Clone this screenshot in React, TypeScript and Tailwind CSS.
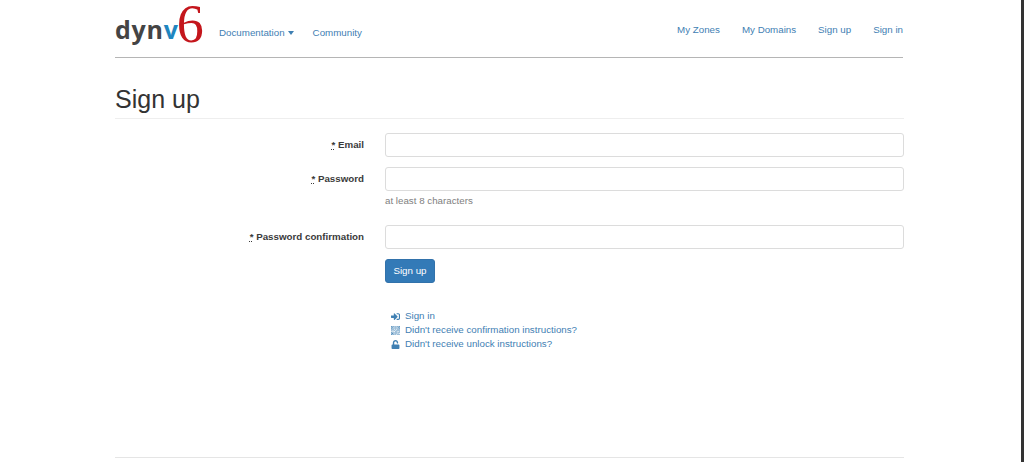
import { FaSignInAlt, FaUnlock } from "react-icons/fa";
import { ImQrcode } from "react-icons/im";

const inputClass = "block h-6 w-full min-w-0 rounded-[3px] border border-[#dcdcdc] bg-white";

function Label({ text }: { text: string }) {
    return (
        <label className="w-[249px] shrink-0 pt-[4px] text-right text-[9.75px] leading-4 font-bold text-[#3a3a3a]">
            <span className="underline decoration-dotted">*</span> {text}
        </label>
    );
}

export default function App() {
    return (
        <div className="flex h-[462px] w-full overflow-hidden border-r-[3px] border-[#333] bg-white font-['Liberation_Sans',Arial,sans-serif]">
            <div className="ml-[115px] flex w-[789px] flex-col">
                <nav className="mr-px flex h-[58px] shrink-0 border-b border-[#b5b5b5] text-[9.75px] text-[#3f80b3]">
                    <a className="flex w-[92px] items-start">
                        <span className="mt-[17px] font-['Open_Sans',sans-serif] text-[25px] leading-[24px] font-bold tracking-[0.75px] text-[#444]">
                            dyn<span className="text-[#1f86c0]">v</span>
                        </span>
                        <span className="ml-[-2px] font-['Liberation_Serif',serif] text-[54px] leading-[48px] font-normal text-[#c4161c]">6</span>
                    </a>
                    <div className="ml-[12px] flex gap-[19px] pt-[27px] leading-3">
                        <a className="flex items-start">
                            Documentation
                            <span className="mt-1 ml-[3px] border-x-[3.5px] border-t-[4px] border-x-transparent border-t-[#3f80b3]" />
                        </a>
                        <a>Community</a>
                    </div>
                    <div className="ml-auto flex gap-[22px] pt-[24px] leading-3">
                        <a>My Zones</a>
                        <a>My Domains</a>
                        <a>Sign up</a>
                        <a>Sign in</a>
                    </div>
                </nav>

                <h1 className="mt-[27px] h-[34px] border-b border-[#eee] text-[25px] leading-[29px] text-[#333]">Sign up</h1>

                <form className="mt-[14px] flex flex-col">
                    <div className="flex h-[34px] gap-[21px]">
                        <Label text="Email" />
                        <input className={inputClass} />
                    </div>
                    <div className="flex gap-[21px]">
                        <Label text="Password" />
                        <div className="min-w-0 grow">
                            <input className={inputClass} />
                            <p className="mt-[3px] h-[31px] text-[9.75px] leading-[13px] text-[#808080]">at least 8 characters</p>
                        </div>
                    </div>
                    <div className="flex h-[34px] gap-[21px]">
                        <Label text="Password confirmation" />
                        <input className={inputClass} />
                    </div>
                    <div className="mt-[-2px] ml-[270px]">
                        <button type="button" className="h-6 w-[50px] rounded-[3px] border border-[#3272ab] bg-[#337ab7] text-[9.75px] text-white">
                            Sign up
                        </button>
                        <ul className="mt-[26px] ml-[6px] text-[9.75px] leading-[14px] text-[#3f80b3]">
                            <li className="flex items-center gap-[5px]">
                                <FaSignInAlt className="h-[9px] w-[9px]" />
                                <a>Sign in</a>
                            </li>
                            <li className="flex items-center gap-[5px]">
                                <ImQrcode className="h-[9px] w-[9px]" />
                                <a>Didn't receive confirmation instructions?</a>
                            </li>
                            <li className="flex items-center gap-[5px]">
                                <FaUnlock className="h-[9px] w-[9px]" />
                                <a>Didn't receive unlock instructions?</a>
                            </li>
                        </ul>
                    </div>
                </form>

                <footer className="mt-auto mb-[4px] border-t border-[#e5e5e5]" />
            </div>
        </div>
    );
}
